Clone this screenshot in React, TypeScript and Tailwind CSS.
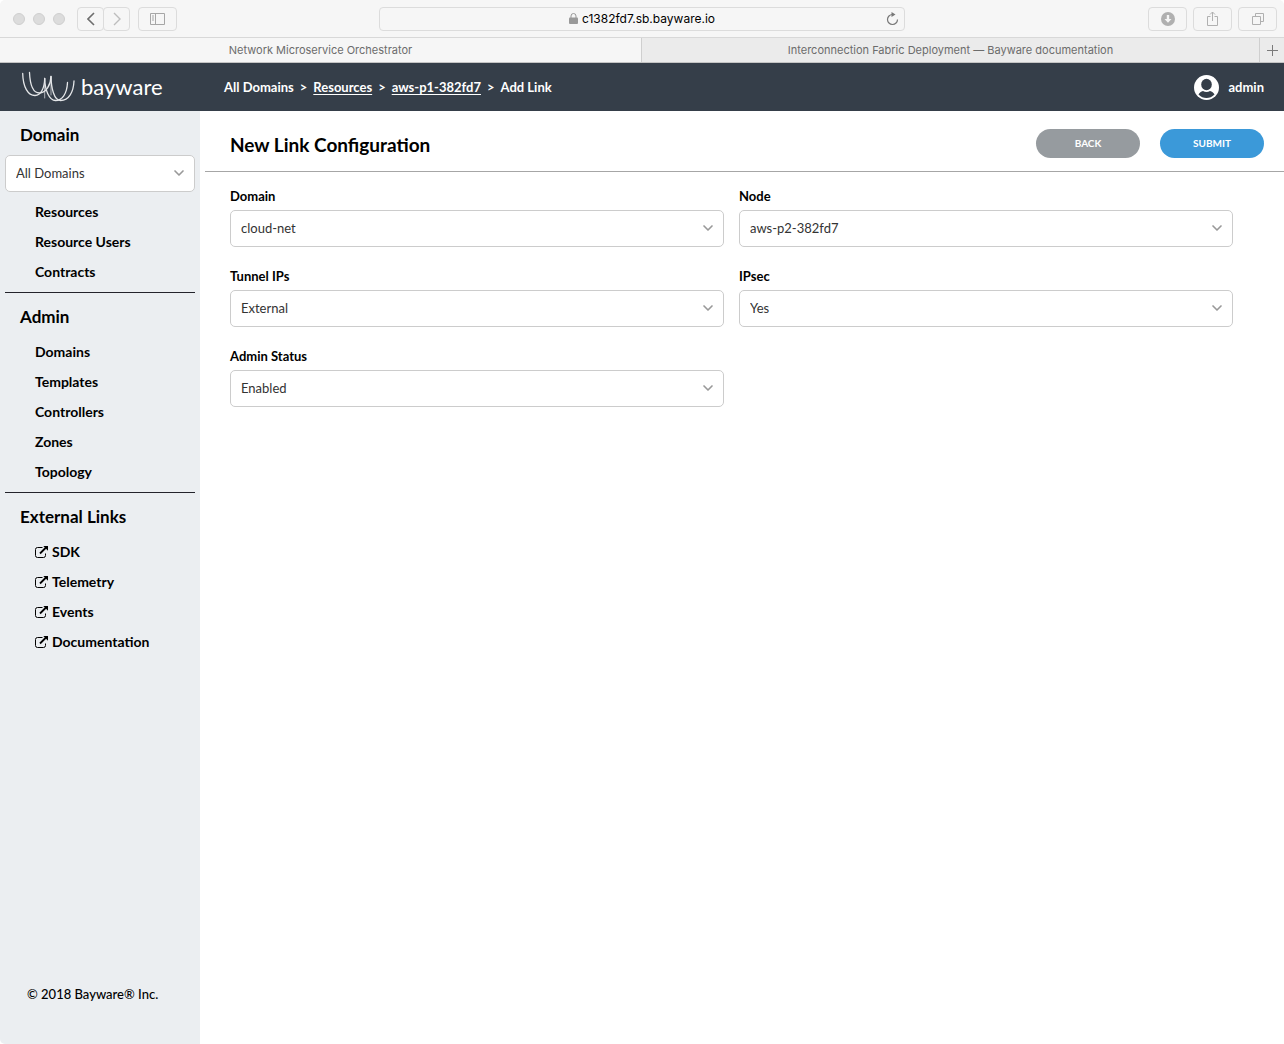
import React from "react";
import { ChevronDown } from "lucide-react";

interface SelectProps {
  id: string;
  value: string;
  options: string[];
  label?: string;
}

interface NavSectionProps {
  title: string;
  items: string[];
  external?: boolean;
  children?: React.ReactNode;
}

const fields = [
  { id: "domain", label: "Domain", value: "cloud-net" },
  { id: "node", label: "Node", value: "aws-p2-382fd7" },
  { id: "tunnel-ips", label: "Tunnel IPs", value: "External" },
  { id: "ipsec", label: "IPsec", value: "Yes" },
  { id: "admin-status", label: "Admin Status", value: "Enabled" },
];

const toolButton =
  "flex h-6 items-center justify-center rounded border border-[#dcdcdc] bg-[#f6f6f6] text-[#b0b0b0]";

const Select: React.FC<SelectProps> = ({ id, value, options, label }) => (
  <div className="relative">
    <select
      id={id}
      aria-label={label}
      defaultValue={value}
      className="block h-[37px] w-full appearance-none rounded-[5px] border border-[#cccccc] bg-white pr-8 pl-[10px] text-[13px] text-[#333333]"
    >
      {options.map((option) => (
        <option key={option}>{option}</option>
      ))}
    </select>
    <ChevronDown
      className="pointer-events-none absolute top-[10px] right-2 h-4 w-4 text-[#999999]"
      strokeWidth={2.5}
    />
  </div>
);

const ExternalIcon = () => (
  <svg viewBox="0 0 13 12" className="h-3 w-[13px]" fill="none" stroke="currentColor">
    <path d="M7.5 1.5H2.5a2 2 0 0 0-2 2v6a2 2 0 0 0 2 2h6a2 2 0 0 0 2-2V7.5" />
    <path d="M5 7.5 11 1.5" strokeWidth="1.8" />
    <path d="M8.3 0H13v4.7Z" fill="currentColor" stroke="none" />
  </svg>
);

const NavSection: React.FC<NavSectionProps> = ({ title, items, external, children }) => (
  <section className="mx-[5px] border-b border-[#23232b] pt-3 pb-[5px] last-of-type:border-b-0">
    <h2 className="mb-2 pl-[15px] text-[17px] leading-6 font-bold">{title}</h2>
    {children}
    <ul>
      {items.map((item) => (
        <li key={item} className="h-[30px] pl-[30px] text-[14px] leading-[30px] font-bold">
          <a href="#" className="inline-flex items-center gap-1">
            {external && <ExternalIcon />}
            {item}
          </a>
        </li>
      ))}
    </ul>
  </section>
);

const BrowserChrome = () => (
  <div className="font-[Inter,sans-serif]">
    <div className="flex h-[38px] items-center justify-between gap-3 border-b border-[#d8d8d8] bg-[#f6f6f6] px-[7px]">
      <div className="flex flex-1 items-center">
        <div className="mr-3 flex gap-2 pl-[6px]">
          {[0, 1, 2].map((i) => (
            <span key={i} className="h-3 w-3 rounded-full border border-[#cfcfcf] bg-[#dcdcdc]" />
          ))}
        </div>
        <button aria-label="Back" className={`${toolButton} w-[27px]`}>
          <svg viewBox="0 0 8 14" className="h-[14px] w-2" fill="none" stroke="#6e6e6e" strokeWidth="1.6">
            <path d="M7 1 1 7l6 6" />
          </svg>
        </button>
        <button aria-label="Forward" className={`${toolButton} -ml-px w-[27px]`}>
          <svg viewBox="0 0 8 14" className="h-[14px] w-2" fill="none" stroke="#bdbdbd" strokeWidth="1.4">
            <path d="m1 1 6 6-6 6" />
          </svg>
        </button>
        <button aria-label="Sidebar" className={`${toolButton} ml-2 w-[39px]`}>
          <svg viewBox="0 0 15 12" className="h-3 w-[15px]" fill="none" stroke="#a6a6a6">
            <path d="M.5.5h14v11H.5ZM5.5.5v11M2 3h2M2 5h2M2 7h2" />
          </svg>
        </button>
      </div>
      <div className="flex h-6 w-1/2 max-w-[526px] items-center rounded border border-[#dcdcdc] pr-[5px] pl-[18px] text-[12px] text-black">
        <div className="flex flex-1 items-center justify-center gap-1">
          <svg viewBox="0 0 9 11" className="h-[11px] w-[9px]">
            <rect y="4.5" width="9" height="6.5" rx="1" fill="#999999" />
            <path d="M2 5V3a2.5 2.5 0 0 1 5 0v2" fill="none" stroke="#999999" />
          </svg>
          <span>c1382fd7.sb.bayware.io</span>
        </div>
        <button aria-label="Reload">
          <svg viewBox="0 0 13 14" className="h-[14px] w-[13px]">
            <path d="M6.5 2.5A5 5 0 1 0 11.5 7.5" fill="none" stroke="#777777" strokeWidth="1.2" />
            <path d="M5.5 0 9.5 2.6 5.5 5Z" fill="#777777" />
          </svg>
        </button>
      </div>
      <div className="flex flex-1 justify-end gap-[6px]">
        <button aria-label="Downloads" className={`${toolButton} w-[39px]`}>
          <svg viewBox="0 0 14 14" className="h-[14px] w-[14px]">
            <circle cx="7" cy="7" r="7" fill="#b0b0b0" />
            <path d="M5.8 3h2.4v4h2.3L7 10.8 3.5 7h2.3Z" fill="#f6f6f6" />
          </svg>
        </button>
        <button aria-label="Share" className={`${toolButton} w-[39px]`}>
          <svg viewBox="0 0 11 15" className="h-[15px] w-[11px]" fill="none" stroke="currentColor">
            <path d="M3.5 5.5h-3v9h10v-9h-3M5.5 10V1M3 3.5 5.5 1 8 3.5" />
          </svg>
        </button>
        <button aria-label="Show tabs" className={`${toolButton} w-[39px]`}>
          <svg viewBox="0 0 12 12" className="h-3 w-3" fill="none" stroke="currentColor">
            <path d="M.5 3.5h8v8h-8ZM3.5 3.5v-3h8v8h-3" />
          </svg>
        </button>
      </div>
    </div>
    <div className="flex h-[25px] border-b border-[#c4c4c4] text-center text-[11px] leading-6 text-[#6c6c6c]">
      <div className="w-1/2 border-r border-[#cfcfcf] bg-[#f6f6f6]">Network Microservice Orchestrator</div>
      <div className="flex w-1/2 bg-[#ebebeb]">
        <div className="flex-1">Interconnection Fabric Deployment — Bayware documentation</div>
        <button aria-label="New tab" className="flex w-[25px] items-center justify-center border-l border-[#cfcfcf]">
          <svg viewBox="0 0 11 11" className="h-[11px] w-[11px]" stroke="#7a7a7a">
            <path d="M5.5 0v11M0 5.5h11" />
          </svg>
        </button>
      </div>
    </div>
  </div>
);

const Header = () => (
  <header className="flex h-12 items-center bg-[#353e49] pr-5 text-[13px] font-bold text-white">
    <a href="#" aria-label="bayware" className="flex w-[224px] items-center gap-[6px] pl-[21px]">
      <svg
        viewBox="0 0 54 32"
        className="h-8 w-[54px]"
        fill="none"
        stroke="#e4e6e8"
        strokeWidth="1.3"
        strokeLinecap="round"
      >
        <path d="M1.7 2.5C2 16 7 24.5 14 24.5c6 0 9.5-7.5 9.7-17" />
        <path d="M8.5 1.5C9 13 12 22 18.5 22 25 22 29.7 14 30 5.5" />
        <path d="M46.5 11.5C46 23 41 29.5 34.5 29.5 28 29.5 24 19 23.7 7.5" />
        <path d="M53 10c-.5 11-5 19.5-13.5 19.5C33 29.5 30.2 17 30 5.5" />
        <path d="M23.7 8v19M30 6v18" strokeWidth="1" opacity="0.7" />
      </svg>
      <span className="text-[22px] leading-8 font-normal">bayware</span>
    </a>
    <nav aria-label="Breadcrumb" className="flex flex-1 gap-[6px] pt-[2px]">
      <span>All Domains</span>
      <span>&gt;</span>
      <a href="#" className="underline underline-offset-2">Resources</a>
      <span>&gt;</span>
      <a href="#" className="underline underline-offset-2">aws-p1-382fd7</a>
      <span>&gt;</span>
      <span>Add Link</span>
    </nav>
    <button className="flex items-center gap-[10px]">
      <svg viewBox="0 0 25 25" className="h-[25px] w-[25px]">
        <circle cx="12.5" cy="12.5" r="12.5" fill="white" />
        <path
          d="M4.5 19.5c1-2 2.5-3 4.5-3.5 2.200 1.300 4.800 1.300 7 0 2 .5 3.500 1.500 4.500 3.500-4.500 4.800-11.500 4.800-16 0Z"
          fill="#353e49"
        />
        <ellipse cx="12.5" cy="9.5" rx="5.3" ry="5.8" fill="#353e49" />
      </svg>
      <span className="pt-[2px]">admin</span>
    </button>
  </header>
);

export default function App() {
  return (
    <div className="flex min-h-screen flex-col overflow-hidden rounded-[5px] bg-white font-[Lato,sans-serif] text-black">
      <BrowserChrome />
      <Header />
      <div className="flex flex-1">
        <aside className="flex w-[200px] shrink-0 flex-col bg-[#ebeef1]">
          <NavSection title="Domain" items={["Resources", "Resource Users", "Contracts"]}>
            <div className="mb-[5px]">
              <Select id="scope" label="Domain scope" value="All Domains" options={["All Domains"]} />
            </div>
          </NavSection>
          <NavSection title="Admin" items={["Domains", "Templates", "Controllers", "Zones", "Topology"]} />
          <NavSection title="External Links" items={["SDK", "Telemetry", "Events", "Documentation"]} external />
          <p className="mt-auto pb-[42px] pl-[27px] text-[13px] leading-4 font-medium">© 2018 Bayware® Inc.</p>
        </aside>

        <main className="flex-1 pl-[5px]">
          <div className="flex h-[61px] items-center border-b border-[#a6a6a6] pt-1 pr-5 pl-[25px]">
            <h1 className="flex-1 pt-1 text-[19px] leading-6 font-bold">New Link Configuration</h1>
            <div className="flex gap-5">
              <button className="h-[29px] w-[104px] rounded-full bg-[#969b9f] pt-px text-[10px] font-bold text-white">
                BACK
              </button>
              <button className="h-[29px] w-[104px] rounded-full bg-[#3b99d9] pt-px text-[10px] font-bold text-white">
                SUBMIT
              </button>
            </div>
          </div>
          <form className="grid grid-cols-2 gap-x-[15px] gap-y-5 pt-[15px] pr-[51px] pl-[25px]">
            {fields.map((field) => (
              <div key={field.id}>
                <label htmlFor={field.id} className="block pb-[5px] text-[13px] leading-[18px] font-bold">
                  {field.label}
                </label>
                <Select id={field.id} value={field.value} options={[field.value]} />
              </div>
            ))}
          </form>
        </main>
      </div>
    </div>
  );
}
